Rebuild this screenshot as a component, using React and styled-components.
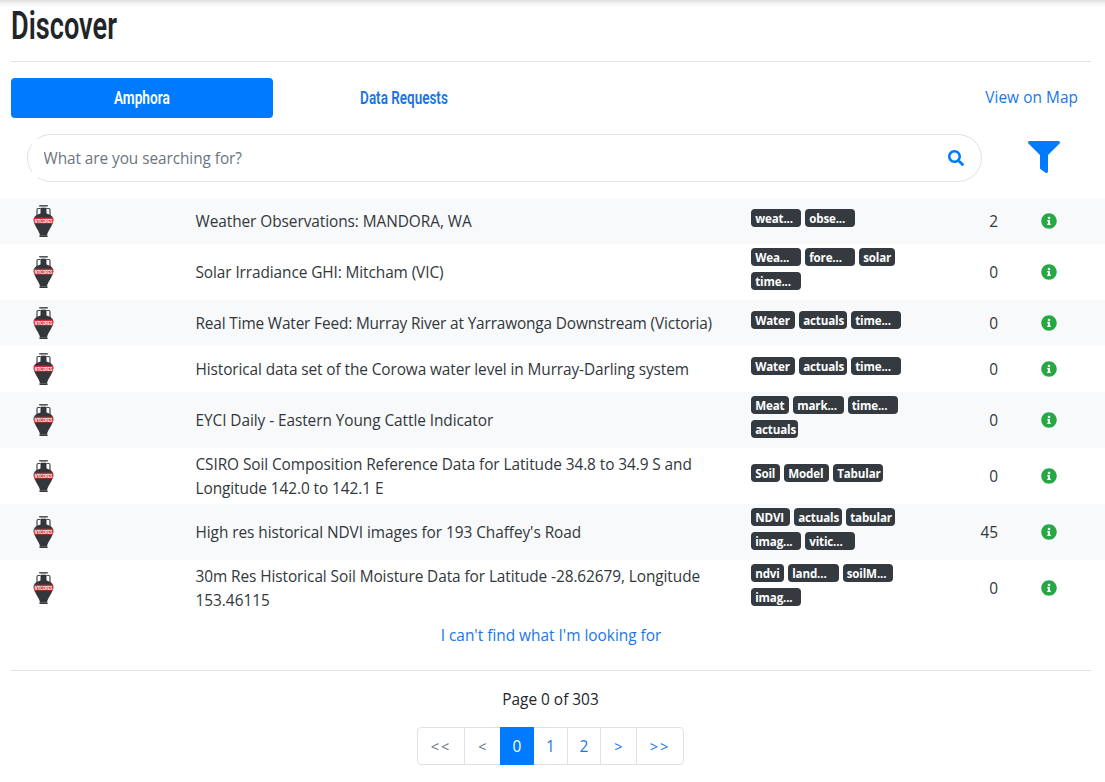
import React from "react";
import styled, { createGlobalStyle } from "styled-components";
import { FaSearch, FaFilter, FaInfoCircle } from "react-icons/fa";

const GlobalStyle = createGlobalStyle`
  * { box-sizing: border-box; }
  body {
    margin: 0;
    background: #fff;
    color: #212529;
    font: 15.4px/24px "Open Sans", "Noto Sans", sans-serif;
    overflow: hidden;
  }
`;

const Page = styled.div`
  height: 782px;
  overflow: hidden;
`;

const TopShade = styled.div`
  height: 8px;
  background: linear-gradient(#dedddd, #f0f0f0 35%, #fafafa 65%, #fff);
`;

const Condensed = styled.span`
  display: inline-block;
  font-family: Roboto, sans-serif;
  font-weight: 600;
  white-space: nowrap;
  transform: scaleX(${(p) => p.$scale});
  transform-origin: ${(p) => p.$origin || "center"};
`;

const Title = styled.h1`
  margin: 0 14px 0 11px;
  height: 54px;
  font-size: 38px;
  line-height: 32px;
  border-bottom: 1px solid #e2e2e2;
`;

const Tabs = styled.nav`
  display: flex;
  align-items: center;
  margin: 16px 27px 0 11px;
  height: 40px;
`;

const Tab = styled.a`
  width: 262px;
  height: 40px;
  line-height: 39px;
  border-radius: 4px;
  text-align: center;
  font-size: 17.5px;
  color: ${(p) => (p.$active ? "#fff" : "#1a74e4")};
  background: ${(p) => (p.$active ? "#007bff" : "transparent")};
`;

const Link = styled.a`
  color: #1a76e8;
  letter-spacing: ${(p) => p.$spacing || 0}px;
  white-space: nowrap;
`;

const MapLink = styled(Link)`
  margin-left: auto;
`;

const SearchRow = styled.div`
  display: flex;
  align-items: center;
  margin: 16px 0 16px 27px;
  height: 48px;
`;

const SearchBox = styled.div`
  display: flex;
  align-items: center;
  width: 955px;
  height: 48px;
  padding: 4px;
  border: 1px solid #dee2e6;
  border-radius: 24px;
  color: #007bff;
`;

const SearchInput = styled.input`
  flex: 1;
  height: 38px;
  padding: 1px 12px 0 11.5px;
  border: 0;
  outline: 0;
  background: #fff;
  font: inherit;
  letter-spacing: -0.07px;
  &::placeholder { color: #6c757d; opacity: 1; }
`;

const SearchButton = styled.span`
  display: flex;
  width: 42px;
  justify-content: center;
  padding-right: 1px;
`;

const FilterButton = styled.span`
  display: flex;
  margin: 0 0 2px 46px;
  color: #007bff;
`;

const Row = styled.div`
  display: grid;
  grid-template-columns: 162.5px 540.5px 160px 102px 1fr;
  align-items: center;
  height: ${(p) => (p.$tall ? 56 : 46)}px;
  padding-left: 33px;
  color: #32373c;
  background: ${(p) => (p.$striped ? "#f8f9fa" : "#fff")};
`;

const Name = styled.div`
  padding-top: 1px;
  white-space: nowrap;
`;

const NameLine = styled.div`
  letter-spacing: ${(p) => p.$spacing}px;
`;

const TagList = styled.div`
  display: flex;
  flex-direction: column;
  margin-left: 15px;
`;

const TagLine = styled.div`
  display: flex;
  gap: 4px;
  height: 24px;
`;

const Tag = styled.span`
  flex: none;
  width: ${(p) => p.$width}px;
  height: 18px;
  padding-left: 4.2px;
  border-radius: 4px;
  background: #343a40;
  color: #fff;
  font-size: 11.6px;
  font-weight: 700;
  line-height: 19px;
  letter-spacing: -0.15px;
  white-space: nowrap;
`;

const Count = styled.div`
  padding-top: 1px;
  text-align: right;
`;

const Info = styled.div`
  display: flex;
  margin-left: 43px;
  color: #28a745;
`;

const Missing = styled.div`
  height: 55px;
  margin: 0 14px 0 11px;
  padding-top: 8px;
  text-align: center;
  border-bottom: 1px solid #e2e2e2;
`;

const PageInfo = styled.div`
  margin: 17px 4px 15px 0;
  text-align: center;
`;

const Pagination = styled.div`
  display: flex;
  width: 267px;
  height: 38px;
  margin-left: 417px;
  border: 1px solid #dee2e6;
  border-radius: 4px;
`;

const PageButton = styled.a`
  width: ${(p) => p.$width}px;
  height: ${(p) => (p.$active ? 38 : 36)}px;
  margin-top: ${(p) => (p.$active ? -1 : 0)}px;
  line-height: ${(p) => (p.$active ? 39 : 37)}px;
  border-right: ${(p) => (p.$edge ? "1px solid #dee2e6" : "0")};
  text-align: center;
  letter-spacing: ${(p) => p.$spacing || 0}px;
  font-size: ${(p) => (p.$arrow ? 14.5 : 15.4)}px;
  color: ${(p) => (p.$active ? "#fff" : p.$disabled ? "#6c757d" : "#1a76e8")};
  background: ${(p) => (p.$active ? "#007bff" : "transparent")};
`;

const Vase = () => (
  <svg width="22" height="34" viewBox="0 0 22 34" overflow="visible">
    <path d="M6.200 1h8.600v1.600H6.200z" fill="#55585b" />
    <path d="M7.500 4h6v7h-6z" fill="#33363a" />
    <path d="M8 3.200h5" stroke="#8b8e90" strokeWidth=".8" />
    <path d="M7.500 4.500H5.200Q4 4.500 4 6v6M13.500 4.500h2.300Q17 4.500 17 6v6" fill="none" stroke="#44474b" strokeWidth="1.200" />
    <path d="M7.500 9.500 3.500 11Q.7 12.500.7 15.500c0 6 4.800 10 6.300 15.500h7c1.500-5.500 6.300-9.500 6.300-15.500q0-3-2.800-4.500l-4-1.500z" fill="#33363a" />
    <path d="M6.500 31.200h8v1.800h-8z" fill="#33363a" />
    <path d="M.8 13.800h19.400q.5 2.800-.5 5.700H1.300Q.3 16.600.8 13.800z" fill="#d92c36" />
    <text transform="translate(10.500 18.600) scale(.66 1)" textAnchor="middle" fontFamily="Liberation Sans, sans-serif" fontSize="5.200" fontWeight="700" fill="#fff">NTICORES</text>
  </svg>
);

const rows = [
  { lines: [["Weather Observations: MANDORA, WA", -0.06]], tags: [[["weat...", 50], ["obse...", 50]]], count: 2 },
  { lines: [["Solar Irradiance GHI: Mitcham (VIC)", -0.09]], tags: [[["Wea...", 50], ["fore...", 50], ["solar", 36]], [["time...", 50]]], count: 0, tall: true },
  { lines: [["Real Time Water Feed: Murray River at Yarrawonga Downstream (Victoria)", -0.15]], tags: [[["Water", 44], ["actuals", 48], ["time...", 50]]], count: 0 },
  { lines: [["Historical data set of the Corowa water level in Murray-Darling system", -0.095]], tags: [[["Water", 44], ["actuals", 48], ["time...", 50]]], count: 0 },
  { lines: [["EYCI Daily - Eastern Young Cattle Indicator", -0.065]], tags: [[["Meat", 38], ["mark...", 50.5], ["time...", 50]], [["actuals", 47]]], count: 0, tall: true },
  { lines: [["CSIRO Soil Composition Reference Data for Latitude 34.8 to 34.9 S and", -0.08], ["Longitude 142.0 to 142.1 E", -0.07]], tags: [[["Soil", 29], ["Model", 45], ["Tabular", 50]]], count: 0, tall: true },
  { lines: [["High res historical NDVI images for 193 Chaffey's Road", -0.06]], tags: [[["NDVI", 39], ["actuals", 48], ["tabular", 49]], [["imag...", 50], ["vitic...", 50]]], count: 45, tall: true },
  { lines: [["30m Res Historical Soil Moisture Data for Latitude -28.62679, Longitude", -0.08], ["153.46115", -0.02]], tags: [[["ndvi", 33], ["land...", 50.5], ["soilM...", 50]], [["imag...", 50]]], count: 0, tall: true },
];

export default function App() {
  return (
    <Page>
      <GlobalStyle />
      <TopShade />
      <Title><Condensed $scale={0.715} $origin="left">Discover</Condensed></Title>
      <Tabs>
        <Tab $active><Condensed $scale={0.78}>Amphora</Condensed></Tab>
        <Tab><Condensed $scale={0.77}>Data Requests</Condensed></Tab>
        <MapLink $spacing={0.06}>View on Map</MapLink>
      </Tabs>
      <SearchRow>
        <SearchBox>
          <SearchInput placeholder="What are you searching for?" />
          <SearchButton><FaSearch size={16} /></SearchButton>
        </SearchBox>
        <FilterButton><FaFilter size={32} /></FilterButton>
      </SearchRow>
      {rows.map((row, i) => (
        <Row key={i} $tall={row.tall} $striped={i % 2 === 0}>
          <Vase />
          <Name>
            {row.lines.map(([text, spacing]) => <NameLine key={text} $spacing={spacing}>{text}</NameLine>)}
          </Name>
          <TagList>
            {row.tags.map((line, j) => (
              <TagLine key={j}>
                {line.map(([text, width]) => <Tag key={text} $width={width}>{text}</Tag>)}
              </TagLine>
            ))}
          </TagList>
          <Count>{row.count}</Count>
          <Info><FaInfoCircle size={16} /></Info>
        </Row>
      ))}
      <Missing><Link>I can't find what I'm looking for</Link></Missing>
      <PageInfo>Page 0 of 303</PageInfo>
      <Pagination>
        <PageButton $width={47} $edge $arrow $disabled $spacing={2}>&lt;&lt;</PageButton>
        <PageButton $width={35} $arrow $disabled>&lt;</PageButton>
        <PageButton $width={34} $active>0</PageButton>
        <PageButton $width={34} $edge>1</PageButton>
        <PageButton $width={33} $edge>2</PageButton>
        <PageButton $width={36} $edge $arrow>&gt;</PageButton>
        <PageButton $width={46} $arrow $spacing={2}>&gt;&gt;</PageButton>
      </Pagination>
    </Page>
  );
}
